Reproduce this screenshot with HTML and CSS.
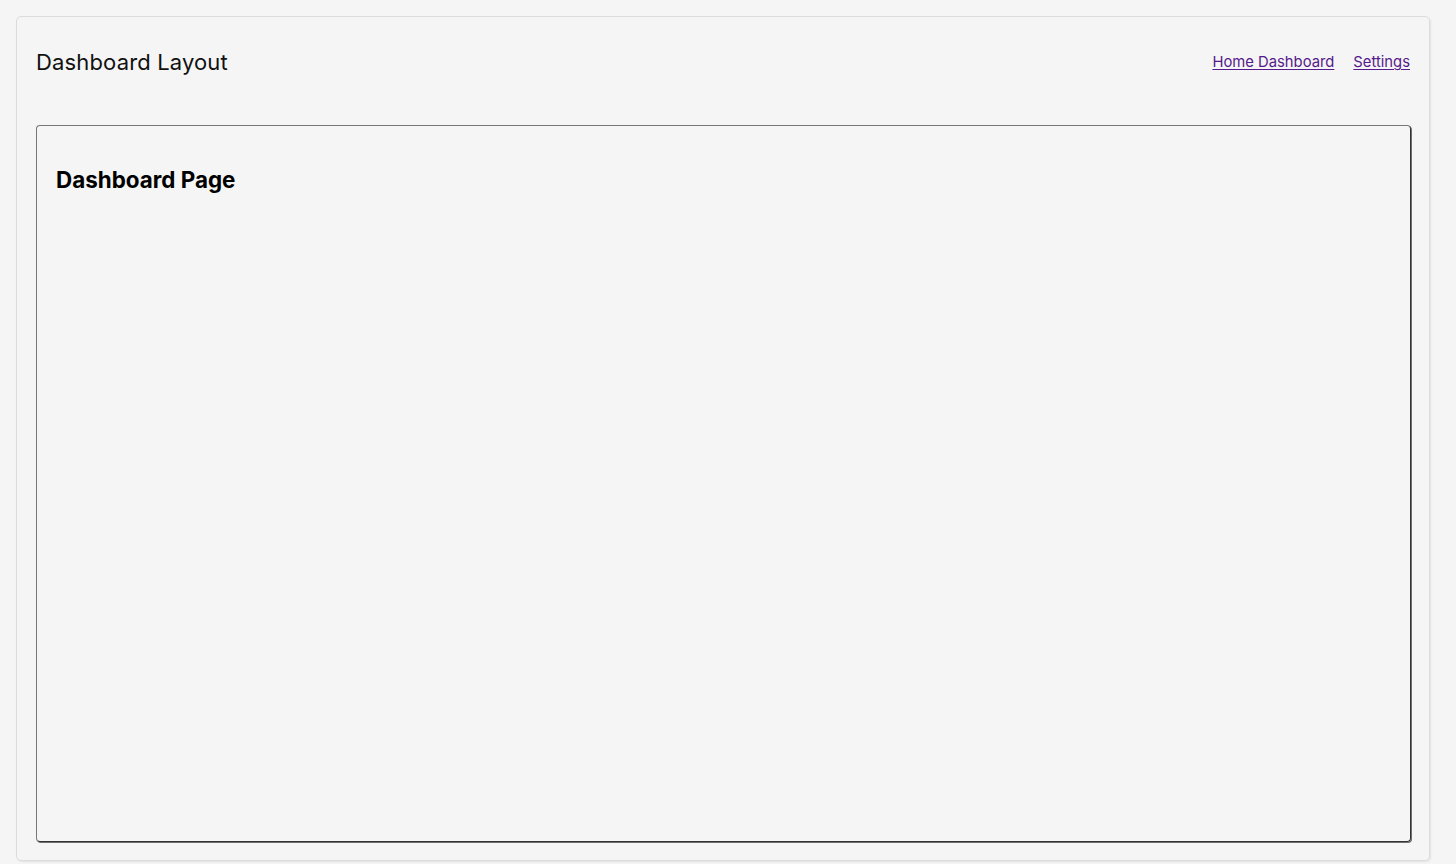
FILE: index.html
```html
<!DOCTYPE html>
<html lang="en">
<head>
<meta charset="utf-8">
<title>Dashboard Layout</title>
<link rel="stylesheet" href="styles.css">
</head>
<body>
<div class="layout">
  <header class="header">
    <h1 class="title">Dashboard Layout</h1>
    <nav class="nav">
      <a href="#home" class="nav-link">Home Dashboard</a>
      <a href="#settings" class="nav-link">Settings</a>
    </nav>
  </header>
  <main class="content">
    <h2 class="page-title">Dashboard Page</h2>
  </main>
</div>
</body>
</html>
```

FILE: styles.css
```css
html, body {
  height: 100%;
}
body {
  margin: 0;
  background: #f5f5f5;
  font-family: Inter, "Noto Sans", sans-serif;
  color: #111;
  box-sizing: border-box;
  padding: 16px 26px 3px 16px;
}
.layout {
  box-sizing: border-box;
  height: 100%;
  border: 1px solid #dcdcdc;
  border-radius: 5px;
  box-shadow: 1px 1px 2px rgba(0,0,0,0.08);
  padding: 18px 18px 18px 19px;
  display: flex;
  flex-direction: column;
}
.header {
  display: flex;
  justify-content: space-between;
  align-items: center;
  height: 54px;
  margin-bottom: 36px;
}
.title {
  margin: 0;
  font-size: 22px;
  font-weight: 400;
  letter-spacing: 0.15px;
  color: #111;
}
.nav {
  display: flex;
  gap: 19px;
  padding-right: 1px;
}
.nav-link {
  font-size: 14.8px;
  color: #551a8b;
  text-decoration: underline;
  text-underline-offset: 2px;
}
.content {
  flex: 1;
  border: 1px solid #777;
  border-right-color: #333;
  border-bottom-color: #333;
  border-radius: 4px;
  box-shadow: 1px 1px 0 rgba(0,0,0,0.55);
  padding: 40px 19px;
}
.page-title {
  margin: 0;
  font-size: 22.4px;
  font-weight: 700;
  color: #000;
}
```
